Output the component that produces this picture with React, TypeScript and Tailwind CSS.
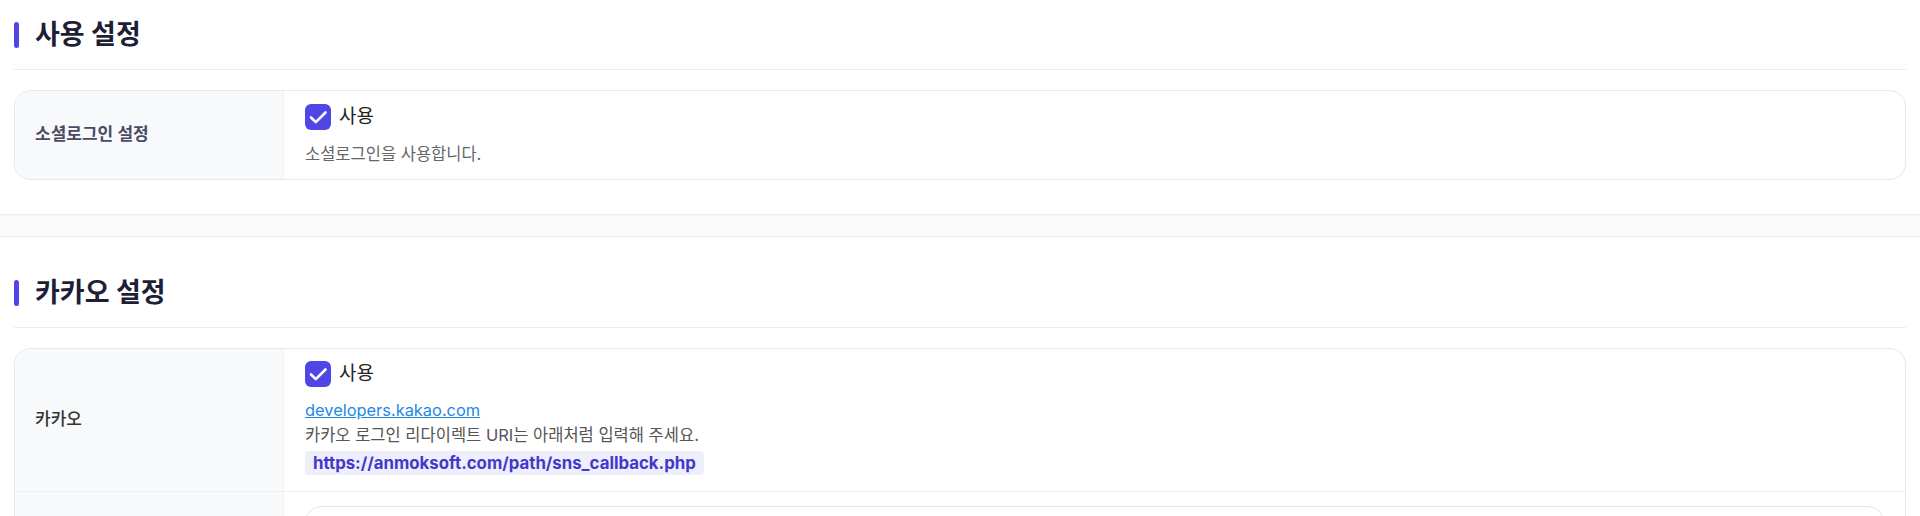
const font = { fontFamily: '"Inter", "Noto Sans CJK KR", sans-serif' };

const CheckBox = () => (
  <span className="flex h-[26px] w-[26px] items-center justify-center rounded-[6px] bg-[#5046e5]">
    <svg width="26" height="26" viewBox="0 0 26 26" fill="none" stroke="white" strokeWidth="2.6" strokeLinecap="round" strokeLinejoin="round">
      <path d="M6 13.5l4.8 4.6L20.5 8.5" />
    </svg>
  </span>
);

const SectionTitle = ({ title }: { title: string }) => (
  <div className="border-b border-[#ececef] pb-[17px]">
    <div className="flex h-[34px] items-center gap-[16px]">
      <span className="h-[26px] w-[5px] rounded-full bg-[#4f46e5]" />
      <h2 className="text-[27px] leading-[34px] font-bold text-[#1e1f36]">{title}</h2>
    </div>
  </div>
);

const Label = ({ children }: { children: React.ReactNode }) => (
  <div className="flex w-[269px] shrink-0 items-center border-r border-[#f0f0f3] bg-[#f8f9fb] px-[20px] text-[17px] font-semibold text-[#4a4b63]">
    {children}
  </div>
);

const UseCheck = () => (
  <label className="flex h-[26px] items-center gap-[8px]">
    <CheckBox />
    <span className="text-[19px] leading-[26px] text-[#222]">사용</span>
  </label>
);

export default function App() {
  return (
    <div className="min-h-screen bg-white" style={font}>
      <section className="px-[14px] pt-[18px] pb-[34px]">
        <SectionTitle title="사용 설정" />
        <div className="mt-[20px] flex overflow-hidden rounded-[16px] border border-[#e8e8ec]">
          <Label>소셜로그인 설정</Label>
          <div className="flex-1 px-[21px] pt-[13px] pb-[12px]">
            <UseCheck />
            <p className="mt-[11px] text-[16.5px] leading-[26px] text-[#666]">소셜로그인을 사용합니다.</p>
          </div>
        </div>
      </section>

      <div className="h-[23px] border-y border-[#ececec] bg-[#fafafa] shadow-[inset_0_1px_2px_rgba(0,0,0,0.03)]" />

      <section className="px-[14px] pt-[39px]">
        <SectionTitle title="카카오 설정" />
        <div className="mt-[20px] flex flex-col overflow-hidden rounded-[16px] border border-[#e8e8ec]">
          <div className="flex border-b border-[#f0f0f3]">
            <Label>
              <span className="font-medium text-[#333]">카카오</span>
            </Label>
            <div className="flex-1 px-[21px] pt-[12px] pb-[16px]">
              <UseCheck />
              <div className="mt-[11px] flex flex-col items-start">
                <a href="#" className="text-[16.4px] leading-[24px] text-[#1e88e5] underline">
                  developers.kakao.com
                </a>
                <p className="text-[16.5px] leading-[27px] text-[#555]">카카오 로그인 리다이렉트 URI는 아래처럼 입력해 주세요.</p>
                <code className="mt-[2px] rounded-[4px] bg-[#efeefc] px-[8px] text-[16.8px] leading-[24px] font-bold text-[#4338ca]" style={font}>
                  https://anmoksoft.com/path/sns_callback.php
                </code>
              </div>
            </div>
          </div>
          <div className="flex">
            <Label>
              <span />
            </Label>
            <div className="flex-1 px-[21px] py-[14px]">
              <div className="h-[46px] rounded-[16px] border border-[#e3e3e8] bg-white" />
            </div>
          </div>
        </div>
      </section>
    </div>
  );
}
